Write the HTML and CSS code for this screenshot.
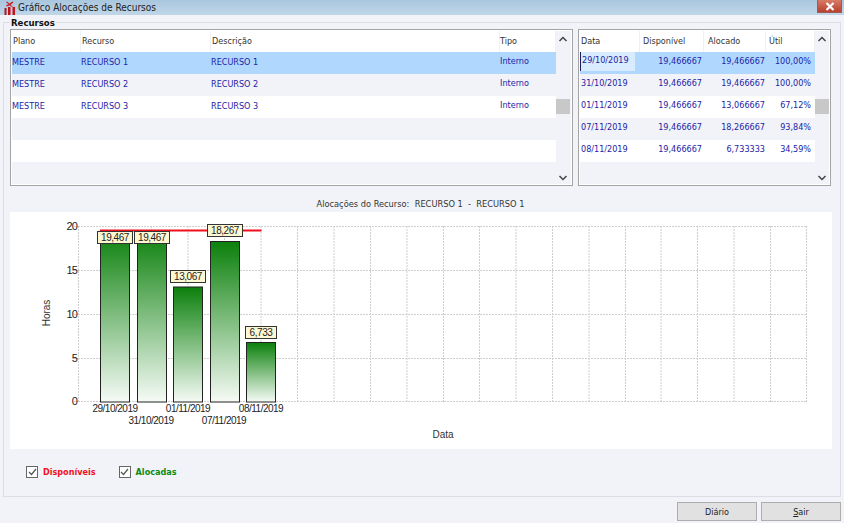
FILE: index.html
```html
<!DOCTYPE html>
<html lang="pt">
<head>
<meta charset="utf-8">
<title>Gráfico Alocações de Recursos</title>
<link rel="stylesheet" href="styles.css">
</head>
<body>
<div class="window">
  <header class="titlebar">
    <svg class="logo" width="15" height="14" viewBox="0 0 15 14"><path d="M4 0.500 L6.500 2.500 L9.500 0.500 L10.500 1.500 L7.500 4 L10 5.500 L9 6 L6.500 4.500 L3.500 5.500 L3 4.500 L5.500 3 L3 1.500Z" fill="#c9242a"/><rect x="1.500" y="7" width="2" height="7" fill="#a81c20"/><rect x="5" y="6" width="2.500" height="8" fill="#c4141a"/><rect x="9.500" y="6" width="2.500" height="8" fill="#c4141a"/></svg>
    <span class="title">Gráfico Alocações de Recursos</span>
    <span class="close"><svg width="10" height="9" viewBox="0 0 10 9"><path d="M1.5 1 L8.5 8 M8.5 1 L1.5 8" stroke="#fff" stroke-width="2.2" fill="none"/></svg></span>
  </header>

  <section class="group">
    <span class="legend">Recursos</span>
    <div class="panels">
      <div class="panel panel-left">
        <div class="grid">
          <div class="row head cols-left"><span>Plano</span><span>Recurso</span><span>Descrição</span><span class="tipo">Tipo</span></div>
          <div class="row selected cols-left"><span>MESTRE</span><span>RECURSO 1</span><span>RECURSO 1</span><span class="tipo">Interno</span></div>
          <div class="row alt cols-left"><span>MESTRE</span><span>RECURSO 2</span><span>RECURSO 2</span><span class="tipo">Interno</span></div>
          <div class="row cols-left"><span>MESTRE</span><span>RECURSO 3</span><span>RECURSO 3</span><span class="tipo">Interno</span></div>
          <div class="row alt"></div>
          <div class="row"></div>
          <div class="row alt"></div>
        </div>
        <div class="scroll">
          <svg width="10" height="6" viewBox="0 0 10 6"><path d="M1.5 5 L5 1.5 L8.5 5" stroke="#444" stroke-width="1.5" fill="none"/></svg>
          <div class="thumb"></div>
          <svg width="10" height="6" viewBox="0 0 10 6"><path d="M1.5 1 L5 4.5 L8.5 1" stroke="#444" stroke-width="1.5" fill="none"/></svg>
        </div>
      </div>
      <div class="panel panel-right">
        <div class="grid">
          <div class="row head cols-right"><span>Data</span><span>Disponível</span><span>Alocado</span><span>Útil</span></div>
          <div class="row selected cols-right"><span class="editing">29/10/2019</span><span class="num">19,466667</span><span class="num">19,466667</span><span class="num">100,00%</span></div>
          <div class="row alt cols-right"><span>31/10/2019</span><span class="num">19,466667</span><span class="num">19,466667</span><span class="num">100,00%</span></div>
          <div class="row cols-right"><span>01/11/2019</span><span class="num">19,466667</span><span class="num">13,066667</span><span class="num">67,12%</span></div>
          <div class="row alt cols-right"><span>07/11/2019</span><span class="num">19,466667</span><span class="num">18,266667</span><span class="num">93,84%</span></div>
          <div class="row cols-right"><span>08/11/2019</span><span class="num">19,466667</span><span class="num">6,733333</span><span class="num">34,59%</span></div>
          <div class="row alt"></div>
        </div>
        <div class="scroll">
          <svg width="10" height="6" viewBox="0 0 10 6"><path d="M1.5 5 L5 1.5 L8.5 5" stroke="#444" stroke-width="1.5" fill="none"/></svg>
          <div class="thumb"></div>
          <svg width="10" height="6" viewBox="0 0 10 6"><path d="M1.5 1 L5 4.5 L8.5 1" stroke="#444" stroke-width="1.5" fill="none"/></svg>
        </div>
      </div>
    </div>

    <h2 class="chart-title">Alocações do Recurso:&nbsp; RECURSO 1&nbsp; -&nbsp; RECURSO 1</h2>

    <div class="chart">
      <svg class="chart-svg" width="822" height="237" viewBox="10 212 822 237">
        <defs>
          <linearGradient id="barfill" x1="0" y1="0" x2="0" y2="1">
            <stop offset="0" stop-color="#0b800b"/>
            <stop offset="1" stop-color="#f6fbf6"/>
          </linearGradient>
        </defs>
        <g class="gridlines">
          <path d="M78 226.5H807M78 270.5H807M78 314.5H807M78 358.5H807M78 401.5H807"/>
          <path d="M78.5 226V402M115 226V402M151.5 226V402M188 226V402M224.500 226V402M261 226V402M297.500 226V402M334 226V402M370.500 226V402M407 226V402M443.500 226V402M479.500 226V402M516 226V402M552.500 226V402M589 226V402M625.500 226V402M661 226V402M697.500 226V402M734 226V402M770.500 226V402M806.500 226V402"/>
          <path d="M74 226.500H78M74 270.500H78M74 314.500H78M74 358.500H78M74 401.500H78"/>
        </g>
        <g class="bars">
          <rect x="100.500" y="231" width="29" height="171" fill="url(#barfill)"/>
          <rect x="137.500" y="231" width="29" height="171" fill="url(#barfill)"/>
          <rect x="173.500" y="287" width="29" height="115" fill="url(#barfill)"/>
          <rect x="210.500" y="241.500" width="29" height="160.500" fill="url(#barfill)"/>
          <rect x="246.500" y="342.500" width="29" height="59.500" fill="url(#barfill)"/>
        </g>
        <path class="limit" d="M100 230.500H261.500"/>
        <g class="tip">
          <rect x="97.500" y="231.500" width="35" height="12"/><text x="115" y="241">19,467</text>
          <rect x="134.500" y="231.500" width="35" height="12"/><text x="152" y="241">19,467</text>
          <rect x="170.500" y="270.500" width="35" height="12"/><text x="188" y="280">13,067</text>
          <rect x="207.500" y="224.500" width="35" height="12"/><text x="225" y="234">18,267</text>
          <rect x="245.500" y="326.500" width="31" height="12"/><text x="261" y="336">6,733</text>
        </g>
        <g class="ticks">
          <text x="77" y="230">20</text>
          <text x="77" y="274">15</text>
          <text x="77" y="318">10</text>
          <text x="77" y="362">5</text>
          <text x="77" y="405">0</text>
        </g>
        <g class="dates">
          <text x="115" y="412">29/10/2019</text>
          <text x="151" y="424">31/10/2019</text>
          <text x="188" y="412">01/11/2019</text>
          <text x="224" y="424">07/11/2019</text>
          <text x="261" y="412">08/11/2019</text>
        </g>
        <text class="axis" transform="translate(50 313) rotate(-90)">Horas</text>
        <text class="axis" x="443" y="438">Data</text>
      </svg>
    </div>

    <div class="checks">
      <label class="check red"><span class="box"><svg width="9" height="8" viewBox="0 0 9 8"><path d="M1 4 L3.500 6.500 L8 1" stroke="#555" stroke-width="1.200" fill="none"/></svg></span>Disponíveis</label>
      <label class="check green"><span class="box"><svg width="9" height="8" viewBox="0 0 9 8"><path d="M1 4 L3.500 6.500 L8 1" stroke="#555" stroke-width="1.200" fill="none"/></svg></span>Alocadas</label>
    </div>
  </section>

  <footer class="buttons">
    <button class="btn">Diário</button>
    <button class="btn"><u>S</u>air</button>
  </footer>
</div>
</body>
</html>
```

FILE: styles.css
```css
* { box-sizing: border-box; }
html, body { margin: 0; padding: 0; }
body {
  width: 844px;
  height: 523px;
  overflow: hidden;
  background: #f1f3f9;
  font-family: "DejaVu Sans Condensed", "DejaVu Sans", sans-serif;
  font-size: 9px;
  color: #333;
}
.window { display: flex; flex-direction: column; height: 523px; }

.titlebar {
  height: 15px;
  flex: none;
  display: flex;
  align-items: center;
  background: linear-gradient(#a9c7df, #c0d6e8);
  color: #222;
}
.logo { margin-left: 3px; flex: none; }
.title { font-size: 10px; flex: 1; }
.close {
  width: 25px;
  height: 13px;
  margin: 0 2px 2px 0;
  background: linear-gradient(#d87a66, #b8402f);
  border: 1px solid #a05a50;
  border-top: 0;
  display: flex;
  align-items: center;
  justify-content: center;
}

.group {
  position: relative;
  flex: none;
  height: 475px;
  margin: 7px 3px 0 3px;
  border: 1px solid #dcdee4;
  padding: 6px 6px 0 6px;
}
.legend {
  position: absolute;
  left: 6px;
  top: -6px;
  padding: 0 1px;
  background: #f1f3f9;
  font-weight: bold;
  font-size: 9.5px;
  color: #111;
  line-height: 11px;
}

.panels { display: flex; gap: 5px; }
.panel {
  height: 157px;
  display: flex;
  background: #f1f3f9;
  border: 1px solid #a4a4a4;
  padding: 1px;
  box-shadow: inset 0 0 0 1px #fff;
}
.panel-left { width: 563px; }
.panel-right { width: 253px; }
.grid { flex: none; background: #fff; }
.panel-left .grid { width: 544px; }
.panel-right .grid { width: 235px; }

.row {
  display: grid;
  height: 22px;
  line-height: 20px;
  white-space: nowrap;
  color: #1d1da6;
  background: #fff;
}
.cols-left { grid-template-columns: 69px 130px 289px 56px; }
.cols-right { grid-template-columns: 60px 64px 62px 49px; }
.row.alt { background: #f1f3f9; }
.row.selected { background: #b0d8ff; }
.row.head { height: 21px; line-height: 20px; color: #333; background: #fff; }
.row.head span { padding-left: 1px; border-right: 1px solid #eef0f4; }
.tipo { line-height: 18px; }
.row.head .tipo { padding-left: 0; line-height: 20px; }
.cols-right { line-height: 18px; }
.row.head.cols-right { line-height: 20px; }
.cols-right.head span { padding-left: 3px; }
.cols-right.head span:nth-child(3) { padding-left: 4px; }
.cols-right.head span:first-child { padding-left: 1px; }
.num { text-align: right; padding-right: 2px; }
.cols-right .num:nth-child(3) { padding-right: 1px; }
.cols-right .num:last-child { padding-right: 4px; }
.cols-right span:first-child { padding-left: 1px; }
.row .editing {
  height: 19px;
  width: 55px;
  line-height: 16px;
  background: #d8ebff;
  border-left: 1px solid #1d1d60;
  padding-left: 0;
}

.scroll {
  flex: none;
  width: 14px;
  background: #f1f3f9;
  display: flex;
  flex-direction: column;
  align-items: center;
  padding: 5px 0 3px;
}
.thumb {
  width: 14px;
  height: 15px;
  margin: 57px 0 auto;
  background: #c8c8c8;
}

.chart-title {
  margin: 11px 0 0;
  height: 15px;
  line-height: 13px;
  font-weight: normal;
  font-size: 9.2px;
  text-align: center;
  color: #333;
  padding-right: 3px;
}
.chart { width: 822px; height: 237px; background: #fff; }
.chart-svg { display: block; }
.gridlines path { stroke: #cfcfcf; stroke-width: 1; stroke-dasharray: 2 1; fill: none; }
.bars rect { stroke: #222; stroke-width: 1; }
.limit { stroke: #f0101c; stroke-width: 2; fill: none; }
.tip rect { fill: #fdf8d2; stroke: #333; stroke-width: 1; }
.tip text { text-anchor: middle; font-family: "Liberation Sans", sans-serif; font-size: 10px; letter-spacing: -0.45px; fill: #222; }
.ticks text { text-anchor: end; font-family: "Liberation Sans", sans-serif; font-size: 11px; letter-spacing: -0.9px; fill: #222; }
.dates text { text-anchor: middle; font-family: "Liberation Sans", sans-serif; font-size: 10px; letter-spacing: -0.5px; fill: #222; }
.axis { text-anchor: middle; font-family: "Liberation Sans", sans-serif; font-size: 10px; fill: #333; }

.checks { display: flex; gap: 23px; padding: 16px 0 0 16px; }
.check { display: flex; align-items: center; gap: 5px; font-weight: bold; font-size: 9px; height: 13px; }
.check.red { color: #f0101c; }
.check.green { color: #0a8a14; }
.box {
  width: 12px;
  height: 12px;
  border: 1px solid #666;
  background: #fff;
  display: flex;
  align-items: center;
  justify-content: center;
  flex: none;
}

.buttons {
  display: flex;
  justify-content: flex-end;
  gap: 4px;
  padding: 5px 3px 0 0;
}
.btn {
  width: 80px;
  height: 19px;
  padding: 0;
  background: #e1e1e1;
  border: 1px solid #adadad;
  font: inherit;
  color: #222;
}
```
